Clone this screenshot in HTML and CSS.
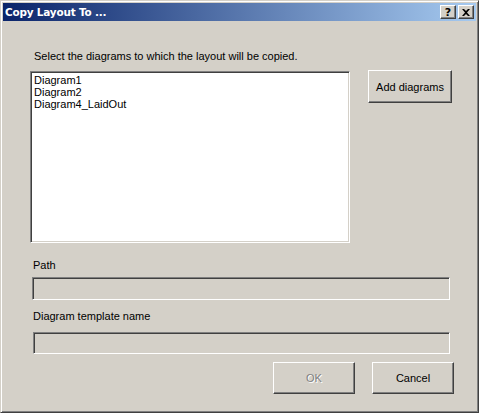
FILE: index.html
```html
<!DOCTYPE html>
<html>
<head>
<meta charset="utf-8">
<link rel="stylesheet" href="styles.css">
</head>
<body>
<div class="window">
  <div class="titlebar">
    <span class="title">Copy Layout To ...</span>
    <div class="caption-buttons">
      <span class="cbtn">?</span>
      <span class="cbtn close">
        <svg width="8" height="7" viewBox="0 0 8 7"><path d="M0 0h2l2 2 2-2h2L5 3.5 8 7H6L4 5 2 7H0l3-3.5z" fill="#000"/></svg>
      </span>
    </div>
  </div>
  <div class="content">
    <div class="intro">Select the diagrams to which the layout will be copied.</div>
    <div class="list-row">
      <div class="listbox">
        <div class="item">Diagram1</div>
        <div class="item">Diagram2</div>
        <div class="item">Diagram4_LaidOut</div>
      </div>
      <button class="btn add">Add diagrams</button>
    </div>
    <div class="label path-label">Path</div>
    <div class="field path-field"></div>
    <div class="label tmpl-label">Diagram template name</div>
    <div class="field tmpl-field"></div>
    <div class="actions">
      <button class="btn disabled">OK</button>
      <button class="btn">Cancel</button>
    </div>
  </div>
</div>
</body>
</html>
```
FILE: styles.css
```css
html, body {
  margin: 0;
  padding: 0;
  background: #d4d0c8;
}
body {
  font-family: "Liberation Sans", Arial, sans-serif;
  font-size: 11px;
  color: #000;
}
.window {
  box-sizing: border-box;
  width: 479px;
  height: 413px;
  background: #d4d0c8;
  border: 1px solid;
  border-color: #d4d0c8 #404040 #404040 #d4d0c8;
  box-shadow: inset 1px 1px #fff, inset -1px -1px #808080;
  padding: 2px;
  display: flex;
  flex-direction: column;
}
.titlebar {
  height: 18px;
  background: linear-gradient(to right, #0a246a, #a6caf0);
  display: flex;
  align-items: center;
  justify-content: space-between;
  padding: 0 2px 0 2px;
}
.title {
  color: #fff;
  font-weight: bold;
  font-size: 11px;
  font-family: "DejaVu Sans", sans-serif;
  letter-spacing: -0.2px;
  transform: scaleX(0.95);
  transform-origin: left;
}
.caption-buttons {
  display: flex;
  gap: 2px;
}
.cbtn {
  box-sizing: border-box;
  width: 16px;
  height: 14px;
  background: #d4d0c8;
  border: 1px solid;
  border-color: #fff #404040 #404040 #fff;
  box-shadow: inset -1px -1px #808080;
  display: flex;
  align-items: center;
  justify-content: center;
  font-weight: bold;
  font-size: 11px;
  font-family: "DejaVu Sans", sans-serif;
  line-height: 1;
}
.content {
  flex: 1;
  padding: 29px 0 0 27px;
}
.intro {
  margin-left: 4px;
  line-height: 13px;
  height: 13px;
}
.list-row {
  display: flex;
  align-items: flex-start;
  margin-top: 8px;
}
.listbox {
  box-sizing: border-box;
  width: 320px;
  height: 172px;
  background: #fff;
  border: 1px solid;
  border-color: #808080 #fff #fff #808080;
  box-shadow: inset 1px 1px #404040, inset -1px -1px #d4d0c8;
  padding: 2px 3px;
}
.item {
  line-height: 12px;
  height: 12px;
}
.btn {
  box-sizing: border-box;
  font-family: "Liberation Sans", Arial, sans-serif;
  font-size: 11px;
  color: #000;
  background: #d4d0c8;
  border: 1px solid;
  border-color: #fff #404040 #404040 #fff;
  box-shadow: inset -1px -1px #808080;
  padding: 0;
  margin: 0;
}
.add {
  width: 84px;
  height: 33px;
  margin-left: 18px;
  margin-top: -1px;
}
.label {
  line-height: 13px;
  height: 13px;
  margin-left: 3px;
}
.path-label {
  margin-top: 16px;
}
.field {
  box-sizing: border-box;
  height: 23px;
  border: 1px solid;
  border-color: #808080 #fff #fff #808080;
  box-shadow: inset 1px 1px #404040, inset -1px -1px #d4d0c8;
}
.path-field {
  width: 418px;
  margin-left: 2px;
  margin-top: 5px;
}
.tmpl-label {
  margin-top: 10px;
}
.tmpl-field {
  width: 417px;
  margin-left: 3px;
  margin-top: 9px;
  height: 22px;
}
.actions {
  display: flex;
  gap: 17px;
  margin-top: 8px;
  margin-left: 243px;
}
.actions .btn {
  width: 82px;
  height: 32px;
}
.btn.disabled {
  color: #808080;
  text-shadow: 1px 1px #fff;
}
```
